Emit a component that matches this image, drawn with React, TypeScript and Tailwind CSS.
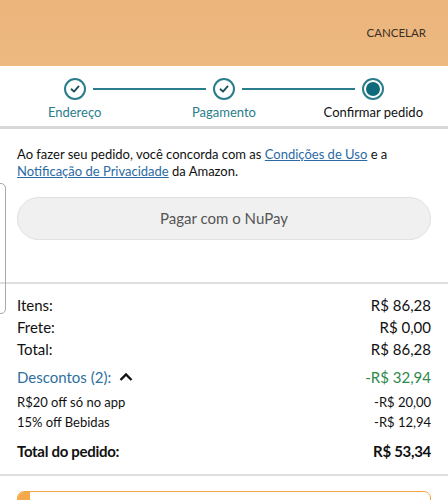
import React from "react";

const font = { fontFamily: 'Lato, "Noto Sans", sans-serif' };

function Check() {
  return (
    <div className="w-[22px] h-[22px] rounded-full border-[2px] border-[#2a7d8b] bg-white flex items-center justify-center shrink-0">
      <svg width="12" height="12" viewBox="0 0 12 12" fill="none">
        <path d="M2.5 6.3 L5 8.6 L9.6 3.4" stroke="#1f4f5a" strokeWidth="1.9" strokeLinecap="round" strokeLinejoin="round" />
      </svg>
    </div>
  );
}

function Current() {
  return (
    <div className="w-[22px] h-[22px] rounded-full border-[2px] border-[#2a7d8b] bg-white flex items-center justify-center shrink-0">
      <div className="w-[14px] h-[14px] rounded-full bg-[#0f6b7c]" />
    </div>
  );
}

function Step({ first, last, current, label }: { first?: boolean; last?: boolean; current?: boolean; label: string }) {
  return (
    <div className="flex flex-col items-center">
      <div className="flex items-center w-full h-[22px]">
        <div className={"flex-1 h-[2px] mr-[7px] " + (first ? "bg-transparent" : "bg-[#2a7d8b]")} />
        {current ? <Current /> : <Check />}
        <div className={"flex-1 h-[2px] ml-[7px] " + (last ? "bg-transparent" : "bg-[#2a7d8b]")} />
      </div>
      <div className={"mt-[3px] text-[13px] leading-[18px] " + (current ? "text-[#111111]" : "text-[#2a7d8b]")}>{label}</div>
    </div>
  );
}

function Row({ l, r, cls, rcls }: { l: React.ReactNode; r: string; cls?: string; rcls?: string }) {
  return (
    <div className={"flex justify-between items-center " + (cls ?? "")}>
      <div className="flex items-center">{l}</div>
      <div className={rcls}>{r}</div>
    </div>
  );
}

export default function App() {
  return (
    <div className="relative w-[448px] h-[500px] overflow-hidden bg-white text-[#111111]" style={font}>
      {/* header */}
      <div className="h-[66px] bg-gradient-to-b from-[#ebb57c] to-[#edb981] flex items-center justify-end pr-[22px]">
        <span className="text-[11.5px] text-[#3a2f24]">CANCELAR</span>
      </div>
      {/* stepper */}
      <div className="grid grid-cols-3 pt-[12px] h-[60px]">
        <Step first label="Endereço" />
        <Step label="Pagamento" />
        <Step last current label="Confirmar pedido" />
      </div>
      <div className="h-[3px] bg-[#d8d8d8]" />

      {/* agreement */}
      <div className="px-[17px] pt-[17px] text-[13px] leading-[17px]">
        Ao fazer seu pedido, você concorda com as{" "}
        <span className="text-[#2b6aa3] underline">Condições de Uso</span> e a{" "}
        <span className="text-[#2b6aa3] underline">Notificação de Privacidade</span> da Amazon.
      </div>
      <div className="px-[17px] pt-[17px]">
        <div className="h-[43px] rounded-full bg-[#f0f0f0] border border-[#e0e0e0] flex items-center justify-center text-[15px] text-[#555555]">
          Pagar com o NuPay
        </div>
      </div>
      <div className="h-[42px]" />
      <div className="h-[2px] bg-[#dedede]" />

      {/* summary */}
      <div className="px-[17px] pt-[10px] text-[15px]">
        <Row l="Itens:" r="R$ 86,28" cls="h-[22px]" />
        <Row l="Frete:" r="R$ 0,00" cls="h-[22px]" />
        <Row l="Total:" r="R$ 86,28" cls="h-[23px]" />
        <Row
          cls="h-[32px]"
          l={
            <>
              <span className="text-[#2d6f9e]">Descontos (2):</span>
              <svg className="ml-[8px]" width="14" height="10" viewBox="0 0 14 10" fill="none">
                <path d="M1.5 8 L7 2.5 L12.5 8" stroke="#111" strokeWidth="2.3" strokeLinejoin="miter" />
              </svg>
            </>
          }
          r="-R$ 32,94"
          rcls="text-[#2e8a4a]"
        />
        <Row l="R$20 off só no app" r="-R$ 20,00" cls="h-[20px] text-[13px]" />
        <Row l="15% off Bebidas" r="-R$ 12,94" cls="h-[20px] text-[13px]" />
        <Row
          l={<span className="font-bold tracking-[-0.3px]">Total do pedido:</span>}
          r="R$ 53,34"
          rcls="font-bold tracking-[-0.3px]"
          cls="h-[36px]"
        />
      </div>
      <div className="mt-[5px] h-[2px] bg-[#dedede]" />
      <div className="px-[17px] pt-[15px]">
        <div className="h-[40px] rounded-[7px] border-[1.5px] border-[#f2a743] flex overflow-hidden">
          <div className="w-[12px] bg-[#f5a94a]" />
        </div>
      </div>

      {/* left edge card fragment */}
      <div className="absolute left-[-10px] top-[183px] w-[16px] h-[131px] rounded-[5px] border border-[#a9a9a9]" />
    </div>
  );
}
